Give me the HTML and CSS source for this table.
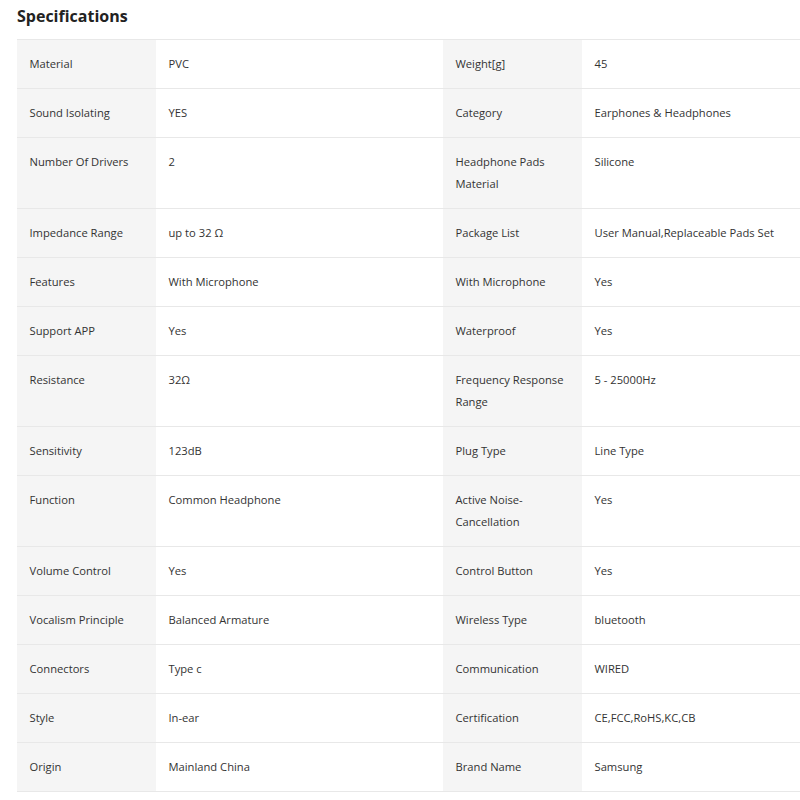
FILE: index.html
```html
<!DOCTYPE html>
<html>
<head>
<meta charset="utf-8">
<link rel="stylesheet" href="styles.css">
</head>
<body>
<div class="page">
  <h2 class="title">Specifications</h2>
  <div class="table-wrap">
  <table class="specs">
    <colgroup>
      <col class="c-label"><col class="c-value"><col class="c-label"><col class="c-value2">
    </colgroup>
    <tbody>
      <tr><td class="k">Material</td><td class="v">PVC</td><td class="k">Weight[g]</td><td class="v">45</td></tr>
      <tr><td class="k">Sound Isolating</td><td class="v">YES</td><td class="k">Category</td><td class="v">Earphones &amp; Headphones</td></tr>
      <tr><td class="k">Number Of Drivers</td><td class="v">2</td><td class="k">Headphone Pads Material</td><td class="v">Silicone</td></tr>
      <tr><td class="k">Impedance Range</td><td class="v">up to 32 Ω</td><td class="k">Package List</td><td class="v">User Manual,Replaceable Pads Set</td></tr>
      <tr><td class="k">Features</td><td class="v">With Microphone</td><td class="k">With Microphone</td><td class="v">Yes</td></tr>
      <tr><td class="k">Support APP</td><td class="v">Yes</td><td class="k">Waterproof</td><td class="v">Yes</td></tr>
      <tr><td class="k">Resistance</td><td class="v">32Ω</td><td class="k">Frequency Response Range</td><td class="v">5 - 25000Hz</td></tr>
      <tr><td class="k">Sensitivity</td><td class="v">123dB</td><td class="k">Plug Type</td><td class="v">Line Type</td></tr>
      <tr><td class="k">Function</td><td class="v">Common Headphone</td><td class="k">Active Noise-Cancellation</td><td class="v">Yes</td></tr>
      <tr><td class="k">Volume Control</td><td class="v">Yes</td><td class="k">Control Button</td><td class="v">Yes</td></tr>
      <tr><td class="k">Vocalism Principle</td><td class="v">Balanced Armature</td><td class="k">Wireless Type</td><td class="v">bluetooth</td></tr>
      <tr><td class="k">Connectors</td><td class="v">Type c</td><td class="k">Communication</td><td class="v">WIRED</td></tr>
      <tr><td class="k">Style</td><td class="v">In-ear</td><td class="k">Certification</td><td class="v">CE,FCC,RoHS,KC,CB</td></tr>
      <tr><td class="k">Origin</td><td class="v">Mainland China</td><td class="k">Brand Name</td><td class="v">Samsung</td></tr>
    </tbody>
  </table>
  </div>
</div>
</body>
</html>
```

FILE: styles.css
```css
html, body {
  margin: 0;
  padding: 0;
  overflow: hidden;
  background: #fff;
}
.page {
  padding: 0 0 0 17px;
  font-family: "Open Sans", "Liberation Sans", sans-serif;
  color: #333;
}
.title {
  margin: 0;
  padding-top: 4px;
  font-size: 16px;
  line-height: 24px;
  font-weight: 700;
  color: #222;
  margin-bottom: 11px;
}
.table-wrap {
  overflow: hidden;
}
.specs {
  border-collapse: collapse;
  table-layout: fixed;
  width: 852px;
  font-size: 11.2px;
}
.c-label { width: 139px; }
.c-value { width: 287px; }
.c-value2 { width: 287px; }
.specs td {
  border-top: 1px solid #e8e8e8;
  border-bottom: 1px solid #e8e8e8;
  padding: 13px 12px 13px 12.5px;
  line-height: 22px;
  vertical-align: top;
  color: #333;
}
.specs td.k {
  background: #f5f5f5;
}
```
